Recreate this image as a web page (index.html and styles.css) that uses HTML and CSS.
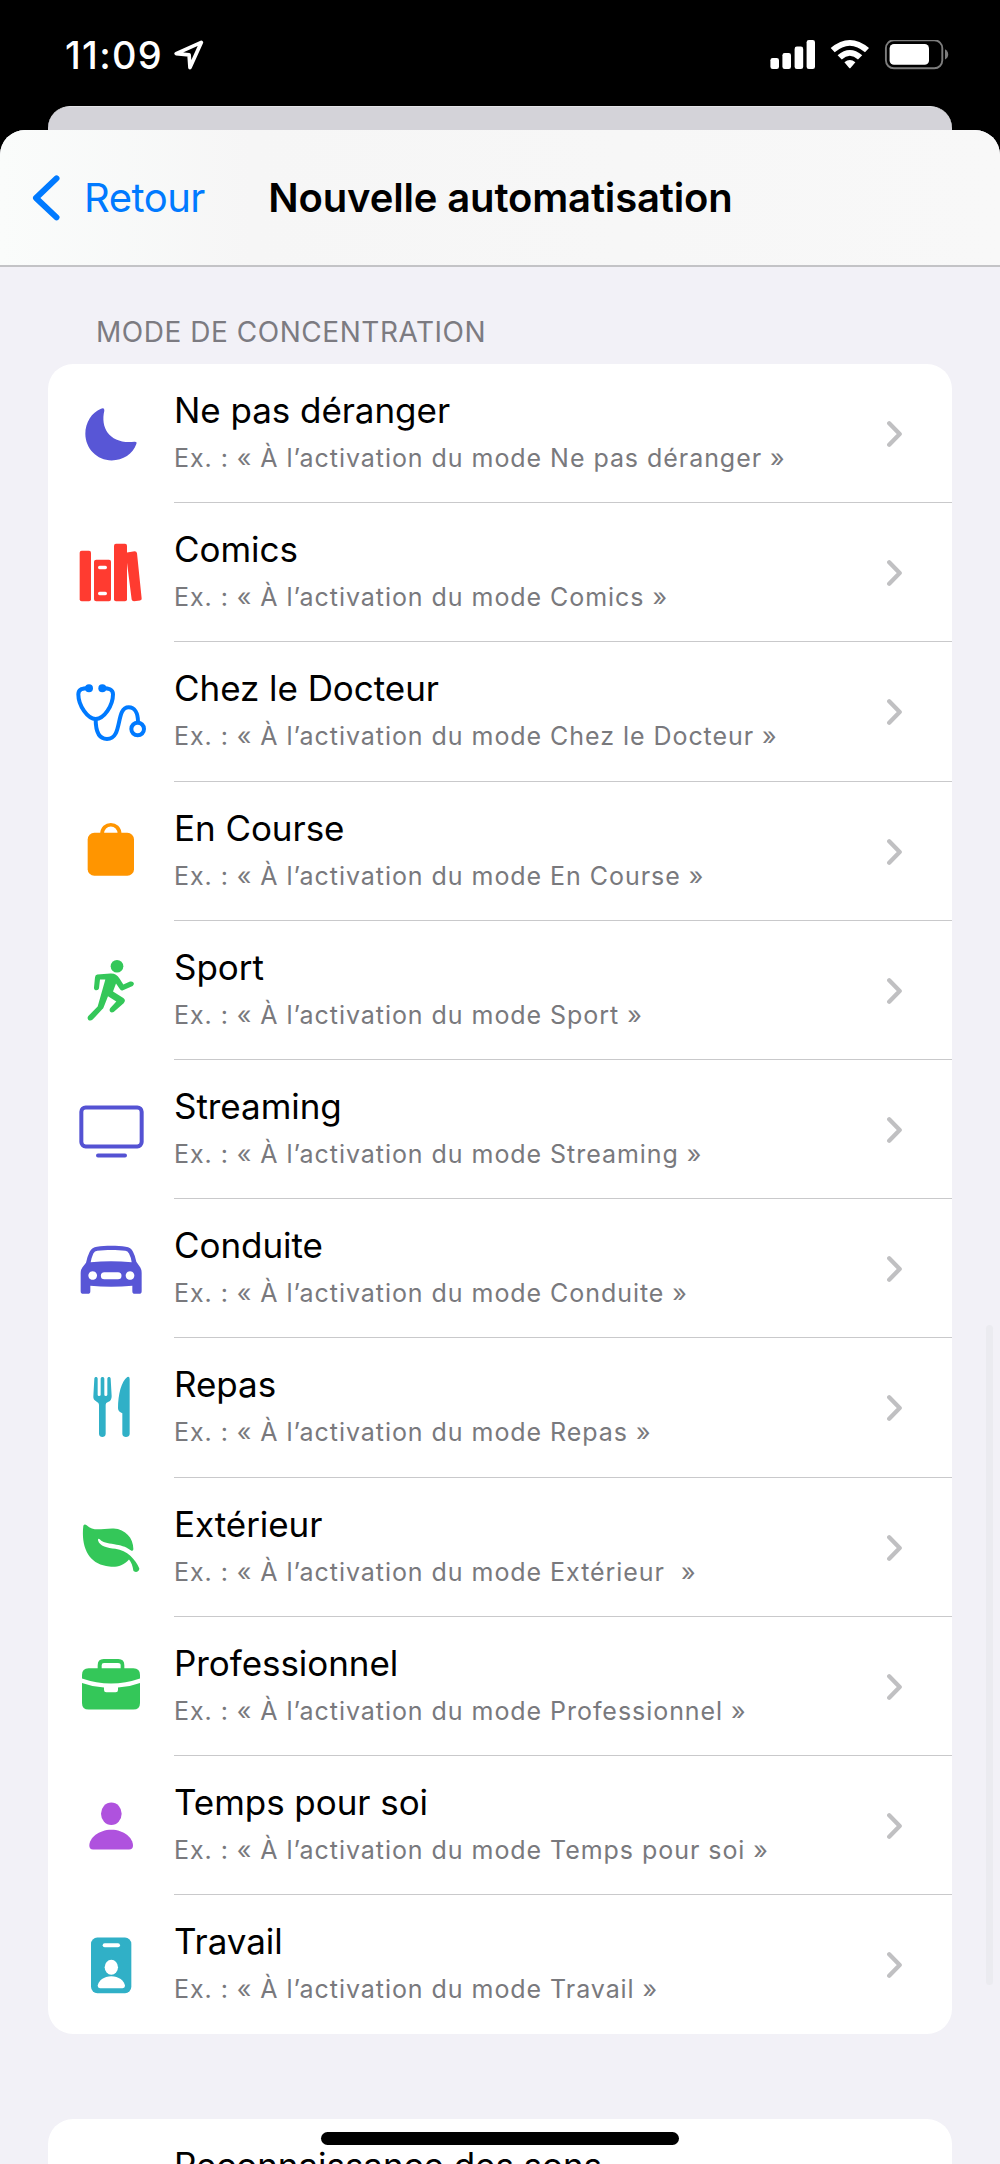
FILE: index.html
```html
<!DOCTYPE html>
<html lang="fr">
<head>
<meta charset="utf-8">
<title>Nouvelle automatisation</title>
<link rel="stylesheet" href="styles.css">
</head>
<body>
<svg width="0" height="0" class="defs" aria-hidden="true">
  <symbol id="chevron" viewBox="0 0 15 26"><path d="M2.200 2.300 L12.700 13 L2.200 23.700" fill="none" stroke="#c0c0c2" stroke-width="4.300" stroke-linecap="round" stroke-linejoin="round"/></symbol>
</svg>
<div class="phone">
  <header class="status">
    <div class="clock">
      <span class="time">11:09</span>
      <svg class="locate" viewBox="0 0 30 30" width="30" height="30"><path d="M27.3 2.4 L2.2 13.6 L15.1 14.8 L16 27.6 Z" fill="none" stroke="#fff" stroke-width="3.7" stroke-linejoin="round"/></svg>
    </div>
    <svg class="indicators" viewBox="0 0 180 30" width="180" height="30">
      <g fill="#fff">
        <rect x="0.4" y="18" width="8.6" height="11" rx="2.3"/>
        <rect x="12.4" y="13" width="8.6" height="16" rx="2.3"/>
        <rect x="24.6" y="6.6" width="8.6" height="22.4" rx="2.3"/>
        <rect x="36.6" y="0" width="8.4" height="29" rx="2.3"/>
        <path d="M60.7 8.1 Q79.8 -8 99 8.1 L95 12.3 Q79.8 -1 64.7 12.3 Z"/>
        <path d="M67.6 15.2 Q79.8 4.8 92.2 15.2 L88 19.5 Q79.8 12.2 71.8 19.5 Z"/>
        <path d="M74.4 22.2 Q79.8 17.6 85.4 22.2 L80.7 27.7 Q79.8 28.7 79 27.7 Z"/>
        <rect x="119.6" y="4" width="39.4" height="20.8" rx="4.4"/>
      </g>
      <rect x="115.9" y="0.3" width="56.4" height="28" rx="8" fill="none" stroke="#7d7d7d" stroke-width="1.9"/>
      <path d="M175 9.3 Q178.2 11.2 178.2 14.4 Q178.2 17.6 175 19.6 Z" fill="#7d7d7d"/>
    </svg>
  </header>
  <div class="behind"></div>
  <main class="sheet">
    <nav class="navbar">
      <a class="back">
        <svg viewBox="0 0 28 46" width="28" height="46"><path d="M24.500 3.400 L4 23 L24.500 42.400" fill="none" stroke="#007aff" stroke-width="6" stroke-linecap="round" stroke-linejoin="round"/></svg>
        <span>Retour</span>
      </a>
      <h1>Nouvelle automatisation</h1>
    </nav>
    <h2 class="section">MODE DE CONCENTRATION</h2>
    <ul class="card">
      <li class="row">
        <svg class="icon" viewBox="60 70.8 330 300"><path d="M183 145 Q194 141 193 151 C180 205 212 252 283 244 Q292 243 289 251 C279 281 249 300 215 300 C171 300 136 264 136 220 C136 187 155 156 183 145 Z" fill="#5856d6"/></svg>
        <div class="text"><div><h3>Ne pas déranger</h3><p>Ex. : « À l’activation du mode Ne pas déranger »</p></div><svg class="chev"><use href="#chevron"/></svg></div>
      </li>
      <li class="row">
        <svg class="icon" viewBox="0 8.4 330 300"><g fill="#ff3b30"><rect x="59" y="92" width="34" height="151" rx="6"/><path fill-rule="evenodd" d="M109 119 H147 Q153 119 153 125 V237 Q153 243 147 243 H109 Q102 243 102 237 V125 Q102 119 109 119 Z M119 137 a5 5 0 0 0 0 10 H136 a5 5 0 0 0 0 -10 Z M119 215 a5 5 0 0 0 0 10 H136 a5 5 0 0 0 0 -10 Z"/><rect x="162" y="71" width="39" height="172" rx="6"/><path d="M201 97 L224 93 Q230 93 231 99 L245 235 Q246 240 240 241 L222 243 Q216 243 215 238 L201 128 Z"/></g></svg>
        <div class="text"><div><h3>Comics</h3><p>Ex. : « À l’activation du mode Comics »</p></div><svg class="chev"><use href="#chevron"/></svg></div>
      </li>
      <li class="row">
        <svg class="icon" viewBox="0 426 330 300"><g fill="none" stroke="#007aff" stroke-width="12" stroke-linecap="round"><path d="M86 504 C69 505 55 506 55 523 C55 557 83 597 107 597 C132 597 159 557 159 523 C159 507 145 505 128 504"/><path d="M107 598 C107 632 115 657 141 657 C190 657 165 562 206 562 C224 562 234 580 234 606"/><circle cx="233" cy="627" r="19"/></g><g fill="#007aff"><circle cx="87" cy="505" r="12"/><circle cx="127" cy="505" r="12"/></g></svg>
        <div class="text"><div><h3>Chez le Docteur</h3><p>Ex. : « À l’activation du mode Chez le Docteur »</p></div><svg class="chev"><use href="#chevron"/></svg></div>
      </li>
      <li class="row">
        <svg class="icon" viewBox="0 3.6 330 300"><rect x="83" y="99" width="139" height="129" rx="20" fill="#ff9500"/><path d="M126 104 C126 65 179 65 179 104" fill="none" stroke="#ff9500" stroke-width="11"/></svg>
        <div class="text"><div><h3>En Course</h3><p>Ex. : « À l’activation du mode En Course »</p></div><svg class="chev"><use href="#chevron"/></svg></div>
      </li>
      <li class="row">
        <svg class="icon" viewBox="0 421.2 330 300"><g fill="#34c759"><circle cx="171" cy="500" r="19"/><path d="M112 525 L151 522 C163 521 172 527 178 536 L190 555 L210 546 C220 543 226 553 218 559 L189 572 Q184 574 180 569 L168 552 L159 576 L190 595 Q199 602 191 611 L161 637 C152 642 145 633 151 625 L169 606 L144 590 L131 623 Q130 627 126 630 L98 660 C89 668 78 658 85 649 L113 621 L136 540 L120 540 L117 566 C115 575 101 573 102 564 L105 533 Q106 526 112 525 Z"/></g></svg>
        <div class="text"><div><h3>Sport</h3><p>Ex. : « À l’activation du mode Sport »</p></div><svg class="chev"><use href="#chevron"/></svg></div>
      </li>
      <li class="row">
        <svg class="icon" viewBox="0 -1.2 330 300"><g fill="none" stroke="#5452d3" stroke-width="12"><rect x="64" y="81" width="181" height="117" rx="13"/><path d="M114 225 H195" stroke-linecap="round"/></g></svg>
        <div class="text"><div><h3>Streaming</h3><p>Ex. : « À l’activation du mode Streaming »</p></div><svg class="chev"><use href="#chevron"/></svg></div>
      </li>
      <li class="row">
        <svg class="icon" viewBox="0 416.4 330 300"><path fill="#5856d6" fill-rule="evenodd" d="M111 500 C135 496 173 496 197 500 Q213 502 219 515 Q226 528 229 545 L241 562 Q245 569 245 579 V633 Q245 641 237 641 H225 Q217 641 217 633 V617 Q153 622 91 617 V633 Q91 641 83 641 H70 Q62 641 62 633 V579 Q62 569 67 562 L78 548 Q82 529 89 515 Q96 502 111 500 Z M112 512 C137 509 171 509 196 512 Q203 513 207 520 Q213 531 215 546 Q153 541 92 546 Q95 531 100 520 Q104 513 112 512 Z M98 573 a13 13 0 1 0 .1 0 Z M210 573 a13 13 0 1 0 .1 0 Z M133 576 a10.500 10.500 0 0 0 0 21 H174 a10.500 10.500 0 0 0 0 -21 Z"/></svg>
        <div class="text"><div><h3>Conduite</h3><p>Ex. : « À l’activation du mode Conduite »</p></div><svg class="chev"><use href="#chevron"/></svg></div>
      </li>
      <li class="row">
        <svg class="icon" viewBox="0 24 330 300"><g fill="#30b0c7"><path d="M103 86 C103 79 113 79 113 86 V134 Q113 138 117 138 Q122 138 122 134 V86 C122 79 133 79 133 86 V134 Q133 138 137 138 Q142 138 142 134 V86 C142 79 152 79 152 86 L155 139 Q155 153 144 156 Q137 158 137 164 V251 C137 264 117 264 117 251 V164 Q117 158 110 155 Q99 150 100 139 Z"/><path d="M202 81 Q209 79 209 87 V252 C209 264 187 264 187 252 V190 Q174 185 174 175 C174 133 184 94 202 81 Z"/></g></svg>
        <div class="text"><div><h3>Repas</h3><p>Ex. : « À l’activation du mode Repas »</p></div><svg class="chev"><use href="#chevron"/></svg></div>
      </li>
      <li class="row">
        <svg class="icon" viewBox="0 441.600 330 300"><path fill="#34c759" d="M70 528 Q73 521 80 526 C101 547 126 535 161 536 C197 538 221 566 220 599 Q218 606 212 601 C196 589 181 586 163 583 C142 580 127 578 120 569 Q114 564 114 571 C119 590 142 593 166 597 C202 602 226 629 238 656 C238 666 225 670 220 662 C218 648 214 637 207 629 C188 650 168 652 148 650 C90 645 62 598 70 528 Z"/></svg>
        <div class="text"><div><h3>Extérieur</h3><p>Ex. : « À l’activation du mode Extérieur &nbsp;»</p></div><svg class="chev"><use href="#chevron"/></svg></div>
      </li>
      <li class="row">
        <svg class="icon" viewBox="0 -10.8 330 300"><g fill="#34c759"><path d="M66 117 V106 Q66 86 86 86 H113 V77 Q113 58 131 58 H175 Q193 58 193 77 V86 H220 Q240 86 240 106 V117 Q153 147 66 117 Z M125 86 H182 V77 Q182 70 174 70 H132 Q125 70 125 77 Z" fill-rule="evenodd"/><path d="M66 130 Q99 142 132 144 V151 Q132 158 139 158 H167 Q174 158 174 151 V144 Q208 142 240 130 V190 Q240 210 220 210 H86 Q66 210 66 190 Z"/></g></svg>
        <div class="text"><div><h3>Professionnel</h3><p>Ex. : « À l’activation du mode Professionnel »</p></div><svg class="chev"><use href="#chevron"/></svg></div>
      </li>
      <li class="row">
        <svg class="icon" viewBox="0 406.8 330 300"><g fill="#af52de"><ellipse cx="154" cy="523" rx="31" ry="34"/><path d="M88 618 C88 596 116 571 154 571 C192 571 219 596 219 618 Q219 630 207 630 H99 Q88 630 88 618 Z"/></g></svg>
        <div class="text"><div><h3>Temps pour soi</h3><p>Ex. : « À l’activation du mode Temps pour soi »</p></div><svg class="chev"><use href="#chevron"/></svg></div>
      </li>
      <li class="row">
        <svg class="icon" viewBox="0 824.4 330 300"><rect x="93" y="892" width="121" height="167" rx="19" fill="#30b0c7"/><g fill="#fff"><rect x="128" y="909" width="52" height="12" rx="6"/><ellipse cx="154" cy="981" rx="20" ry="22.500"/><path d="M113 1037 C115 1021 132 1008 154 1008 C176 1008 193 1021 195 1037 Q195 1044 188 1044 H120 Q113 1044 113 1037 Z"/></g></svg>
        <div class="text"><div><h3>Travail</h3><p>Ex. : « À l’activation du mode Travail »</p></div><svg class="chev"><use href="#chevron"/></svg></div>
      </li>
    </ul>
    <ul class="card next">
      <li class="row"><div class="text"><div><h3>Reconnaissance des sons</h3></div></div></li>
    </ul>
  </main>
  <div class="scrollbar"></div>
  <div class="home"></div>
</div>
</body>
</html>
```
FILE: styles.css
```css
* { box-sizing: border-box; margin: 0; padding: 0; }
body { background: #000; font-family: Inter, "Liberation Sans", sans-serif; color: #000; }
.defs { position: absolute; }
.phone {
  position: relative;
  width: 1000px;
  height: 2164px;
  overflow: hidden;
  display: flex;
  flex-direction: column;
  background: #000;
}
.status {
  height: 106px;
  flex: none;
  display: flex;
  align-items: flex-start;
  justify-content: space-between;
  padding: 40px 50px 0 65px;
}
.clock { display: flex; gap: 11px; }
.time {
  font-size: 38px;
  font-weight: 550;
  line-height: 30px;
  letter-spacing: 1.3px;
  color: #fff;
}
.behind {
  height: 25px;
  flex: none;
  margin: 0 48px;
  border-radius: 22px 22px 0 0;
  background: #d4d3d9;
  border-top: 1px solid #e4e4e8;
}
.sheet {
  height: 2034px;
  flex: none;
  margin-top: -1px;
  border-radius: 25px 25px 0 0;
  background: #f2f1f7;
  overflow: hidden;
}
.navbar {
  height: 137px;
  display: grid;
  grid-template-columns: 1fr auto 1fr;
  align-items: center;
  padding: 0 32px;
  background: linear-gradient(90deg, #fafcfb 0, #f6f6f6 25%, #f8f8f8 100%);
  border-bottom: 2px solid #c3c3c6;
}
.back {
  display: flex;
  align-items: center;
  gap: 24px;
  font-size: 40px;
  letter-spacing: -0.5px;
  color: #007aff;
}
.navbar h1 { font-size: 40px; font-weight: 600; letter-spacing: -0.15px; padding-left: 1px; }
.section {
  padding: 48px 96px 0;
  height: 97px;
  font-size: 28px;
  line-height: 34px;
  font-weight: 400;
  letter-spacing: 0.53px;
  color: #7c7b81;
}
.card {
  margin: 0 48px;
  list-style: none;
  border-radius: 25px;
  background: #fff;
  overflow: hidden;
}
.row { height: 139.2px; display: flex; align-items: center; padding-left: 12px; }
.icon { width: 110px; height: 100px; flex: none; margin-right: 4px; }
.text {
  flex: 1;
  height: 100%;
  display: flex;
  justify-content: space-between;
  padding: 23px 50px 0 0;
  border-bottom: 1px solid #c9c9cb;
}
.row:last-child .text { border-bottom: 0; }
.text h3 { font-size: 35px; line-height: 46px; font-weight: 400; letter-spacing: -0.05px; }
.text p {
  margin-top: 8px;
  font-size: 25px;
  line-height: 34px;
  letter-spacing: 0.95px;
  white-space: pre;
  color: #79797d;
}
.chev { width: 15px; height: 26px; margin-top: 34px; }
.next { margin-top: 85px; }
.next .row { padding-left: 126px; }
.scrollbar {
  position: absolute;
  left: 986px;
  top: 1325px;
  width: 7px;
  height: 660px;
  border-radius: 4px;
  background: #ebebf0;
}
.home {
  position: absolute;
  left: 321px;
  top: 2132px;
  width: 358px;
  height: 13px;
  border-radius: 7px;
  background: #000;
}
```
